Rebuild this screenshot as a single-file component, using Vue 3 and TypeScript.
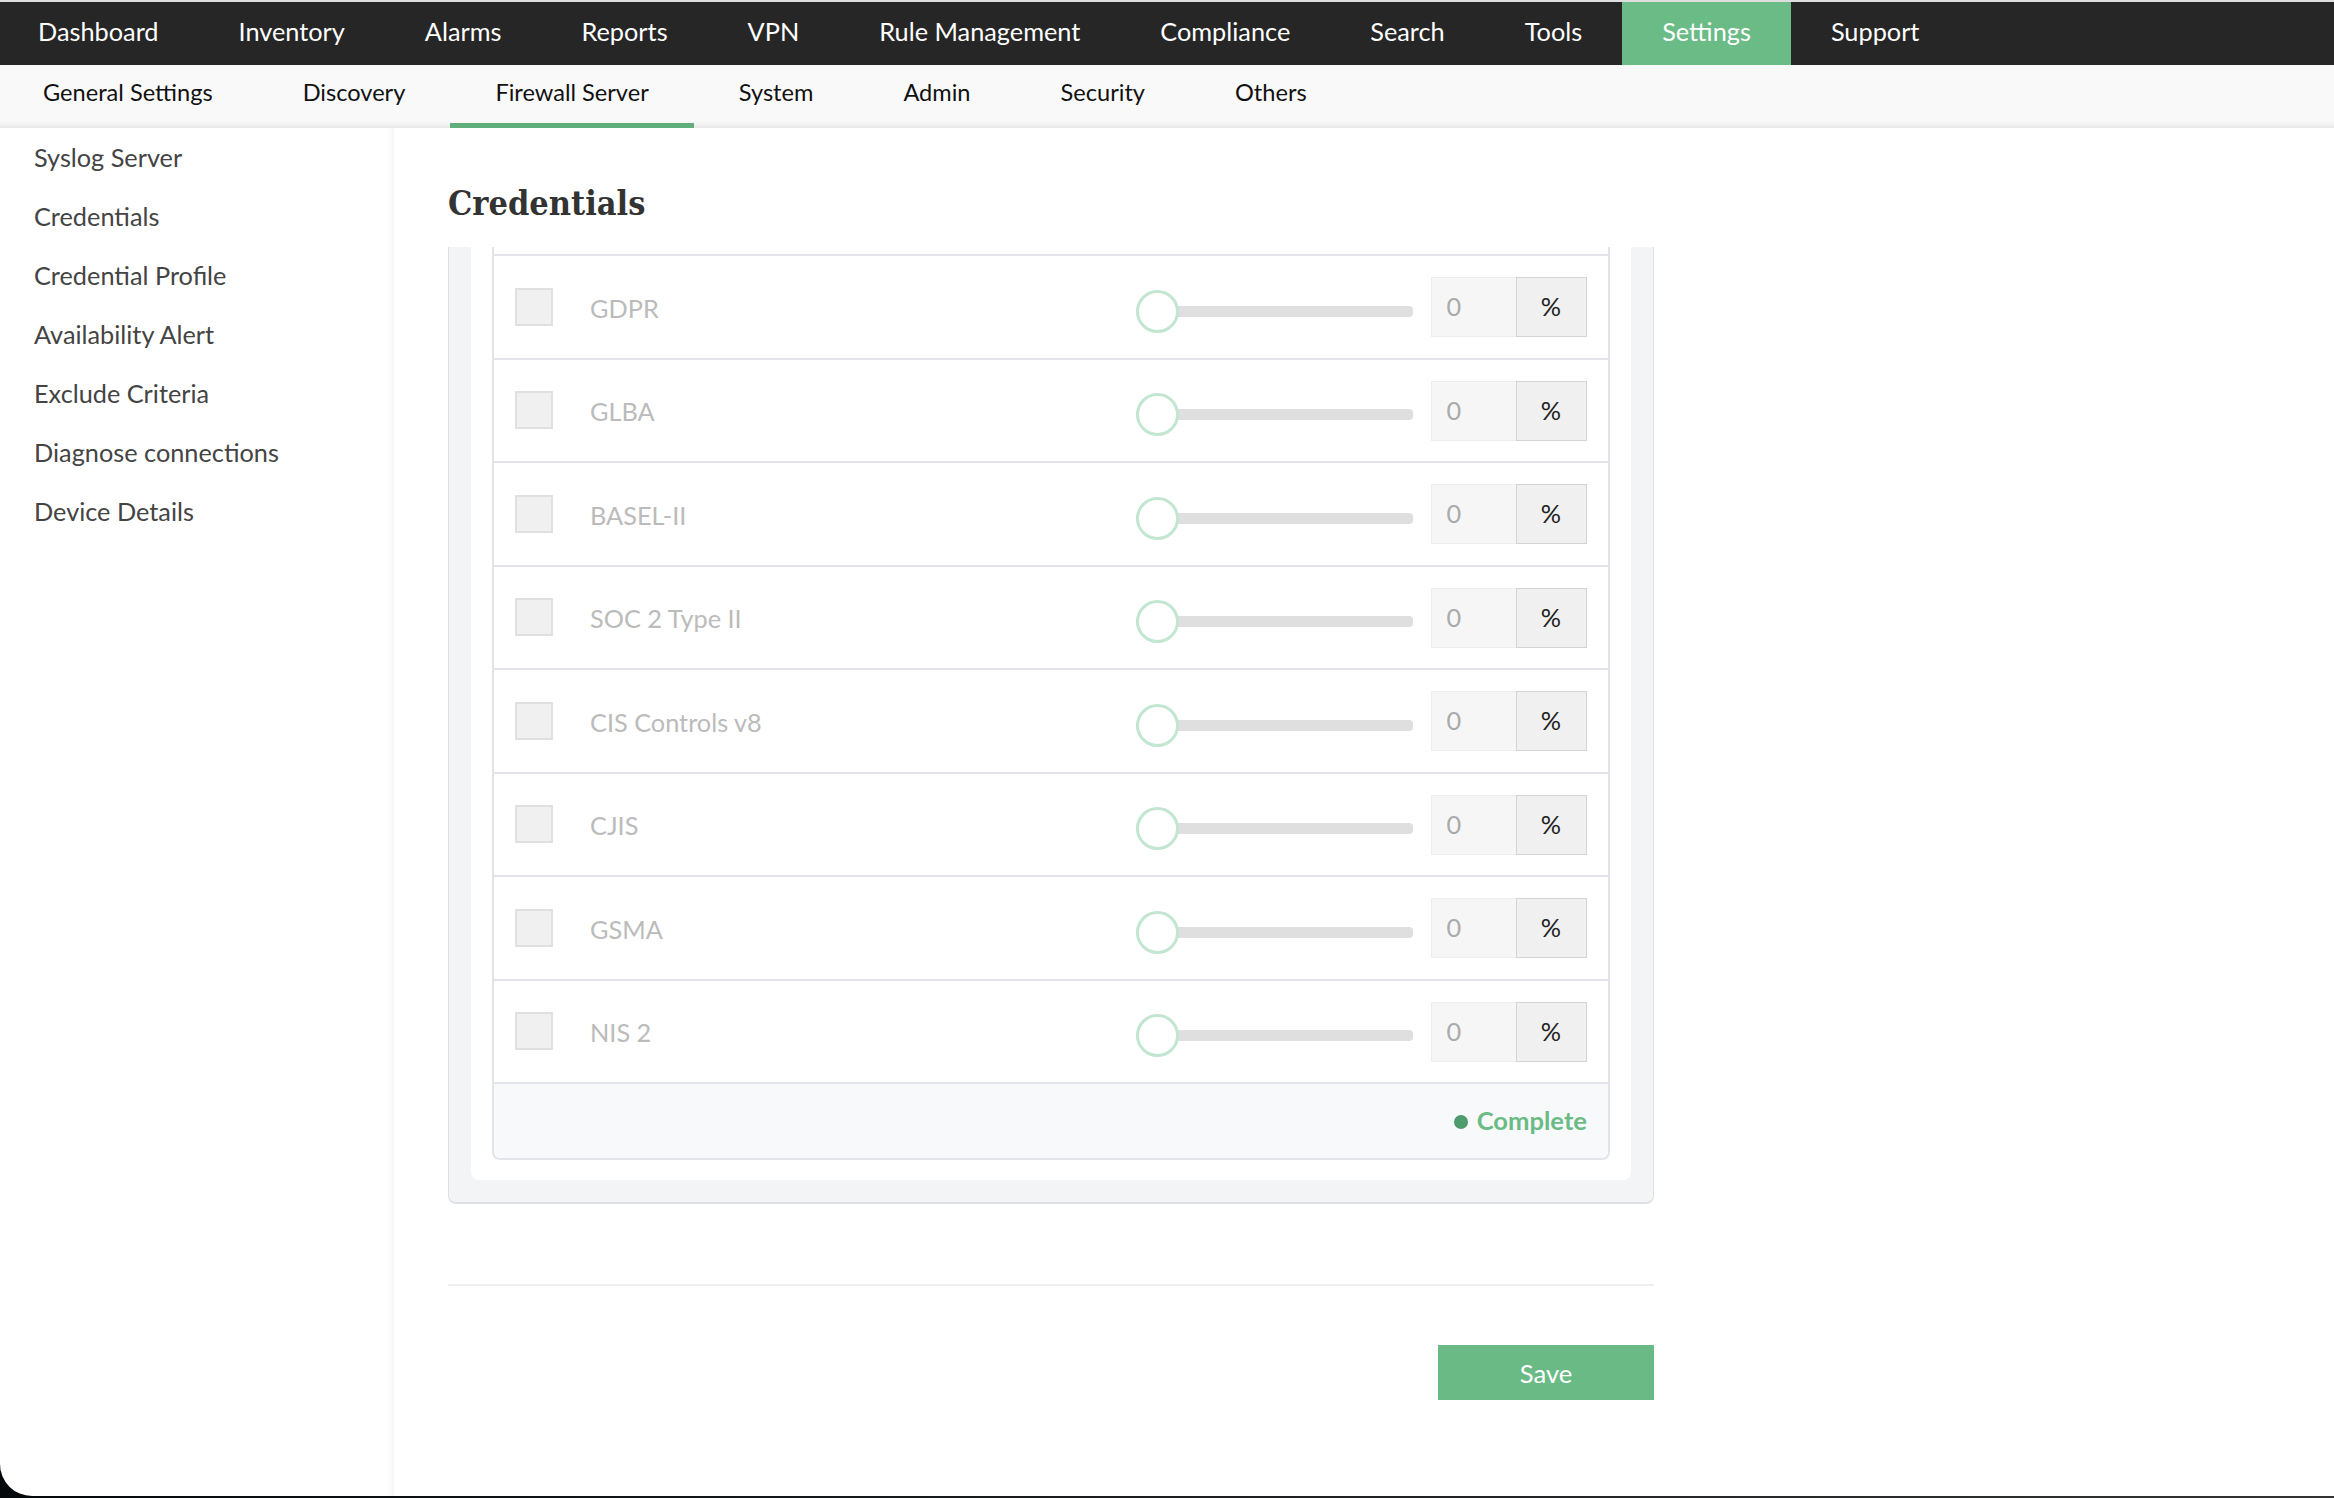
<script setup lang="ts">
const mainNav = ['Dashboard', 'Inventory', 'Alarms', 'Reports', 'VPN', 'Rule Management', 'Compliance', 'Search', 'Tools', 'Settings', 'Support']
const subNav = ['General Settings', 'Discovery', 'Firewall Server', 'System', 'Admin', 'Security', 'Others']
const sideItems = ['Syslog Server', 'Credentials', 'Credential Profile', 'Availability Alert', 'Exclude Criteria', 'Diagnose connections', 'Device Details']
const rows = ['GDPR', 'GLBA', 'BASEL-II', 'SOC 2 Type II', 'CIS Controls v8', 'CJIS', 'GSMA', 'NIS 2']
</script>

<template>
  <div class="window">
    <nav class="main-nav">
      <a v-for="item in mainNav" :key="item" class="main-link" :class="{ active: item === 'Settings' }">{{ item }}</a>
    </nav>
    <nav class="sub-nav">
      <a v-for="item in subNav" :key="item" class="sub-link" :class="{ active: item === 'Firewall Server' }">{{ item }}</a>
    </nav>
    <div class="body">
      <aside class="sidebar">
        <a v-for="item in sideItems" :key="item" class="side-link">{{ item }}</a>
      </aside>
      <main class="content">
        <h1 class="title">Credentials</h1>
        <section class="panel">
          <div class="panel-inner">
            <div class="table">
              <div class="table-top" />
              <div v-for="row in rows" :key="row" class="row">
                <span class="check" />
                <span class="label">{{ row }}</span>
                <div class="slider">
                  <span class="thumb" />
                  <span class="track" />
                </div>
                <div class="field">
                  <span class="value">0</span>
                  <span class="unit">%</span>
                </div>
              </div>
              <div class="table-foot">
                <span class="dot" />
                <span class="status">Complete</span>
              </div>
            </div>
          </div>
        </section>
        <hr class="divider" />
        <div class="actions">
          <button class="save">Save</button>
        </div>
      </main>
    </div>
  </div>
</template>

<style>
html,
body {
  margin: 0;
  background: linear-gradient(90deg, #05090c, #333);
}
</style>

<style scoped>
.window {
  width: 2334px;
  height: 1496px;
  box-sizing: border-box;
  padding-top: 2px;
  background: #fff;
  border-bottom-left-radius: 32px;
  overflow: hidden;
  display: flex;
  flex-direction: column;
  font-family: Lato, 'Noto Sans', sans-serif;
  font-size: 25.3px;
  box-shadow: inset 0 2px 0 #dedede;
}

.main-nav {
  display: flex;
  height: 63px;
  flex: none;
  margin-left: -2px;
  background: #262626;
}

.main-link {
  padding: 0 40px;
  line-height: 58px;
  color: #fff;
}

.main-link.active {
  background: #6abb85;
}

.sub-nav {
  display: flex;
  height: 63px;
  flex: none;
  margin-left: -2px;
  background: #f9f9f9;
  box-shadow: inset 0 -9px 9px -9px rgba(0, 0, 0, 0.14);
}

.sub-link {
  box-sizing: border-box;
  padding: 0 45px;
  line-height: 55px;
  font-size: 23.6px;
  color: #111;
}

.sub-link.active {
  border-bottom: 5px solid #5fae7c;
}

.body {
  flex: 1;
  display: flex;
  min-height: 0;
}

.sidebar {
  width: 394px;
  flex: none;
  box-sizing: border-box;
  padding-left: 34px;
  display: flex;
  flex-direction: column;
  box-shadow: inset -8px 0 8px -8px rgba(0, 0, 0, 0.08);
}

.side-link {
  height: 59px;
  line-height: 58px;
  color: #444;
}

.content {
  width: 1206px;
  margin-left: 54px;
}

.title {
  margin: 0;
  height: 119px;
  line-height: 150px;
  font-family: 'DejaVu Serif Condensed', 'DejaVu Serif', serif;
  font-size: 34px;
  font-weight: 700;
  color: #333;
}

.panel {
  padding: 0 22px 22px;
  background: #f3f4f6;
  border: solid #dfe0e3;
  border-width: 0 1px 2px;
  border-radius: 0 0 8px 8px;
}

.panel-inner {
  padding: 0 21px 20px;
  background: #fff;
  border-radius: 0 0 8px 8px;
}

.table {
  border: solid #e2e4e9;
  border-width: 0 2px 2px;
  border-radius: 0 0 8px 8px;
}

.table-top {
  height: 7px;
}

.row {
  height: 103.5px;
  box-sizing: border-box;
  display: flex;
  align-items: center;
  padding: 0 20px 0 21px;
  border-top: 2px solid #e2e4e9;
}

.check {
  width: 38px;
  height: 38px;
  box-sizing: border-box;
  background: #f0f0f0;
  border: 2px solid #e0e0e0;
}

.label {
  margin-left: 37px;
  margin-top: 2px;
  width: 546px;
  color: #bbb;
}

.slider {
  position: relative;
  width: 276.5px;
  height: 43px;
  margin-top: 9px;
  display: flex;
  align-items: center;
}

.thumb {
  position: absolute;
  left: 0;
  top: 0;
  width: 43px;
  height: 43px;
  box-sizing: border-box;
  background: #fff;
  border: 3px solid #c2e6d1;
  border-radius: 50%;
}

.track {
  width: 100%;
  height: 11px;
  background: #dfdfdf;
  border-radius: 4px;
}

.field {
  display: flex;
  width: 156px;
  height: 60px;
  margin-left: 18px;
  margin-top: 1px;
  box-sizing: border-box;
}

.value {
  flex: 1;
  padding-left: 15px;
  line-height: 57px;
  color: #aaa;
  background: #f6f6f6;
  border: 1px solid #eee;
  border-right: 0;
}

.unit {
  width: 71px;
  box-sizing: border-box;
  text-align: center;
  line-height: 56px;
  color: #222;
  background: #f0f0f0;
  border: 1px solid #d4d4d4;
}

.table-foot {
  height: 76px;
  box-sizing: border-box;
  display: flex;
  align-items: center;
  justify-content: flex-end;
  padding: 0 21px 2px 0;
  background: #f8f9fb;
  border-top: 2px solid #e2e4e9;
  border-radius: 0 0 8px 8px;
}

.dot {
  width: 14px;
  height: 14px;
  margin-right: 9px;
  margin-top: 4px;
  border-radius: 50%;
  background: #4d9d6c;
}

.status {
  font-size: 25.6px;
  font-weight: 700;
  color: #6abb85;
}

.divider {
  height: 2px;
  margin: 80px 0 0;
  background: #efefef;
  border: 0;
}

.actions {
  display: flex;
  justify-content: flex-end;
  margin-top: 59px;
}

.save {
  width: 216px;
  height: 55px;
  padding: 0;
  background: #69ba85;
  border: 0;
  color: #fff;
  font-family: inherit;
  font-size: 25.6px;
}
</style>
